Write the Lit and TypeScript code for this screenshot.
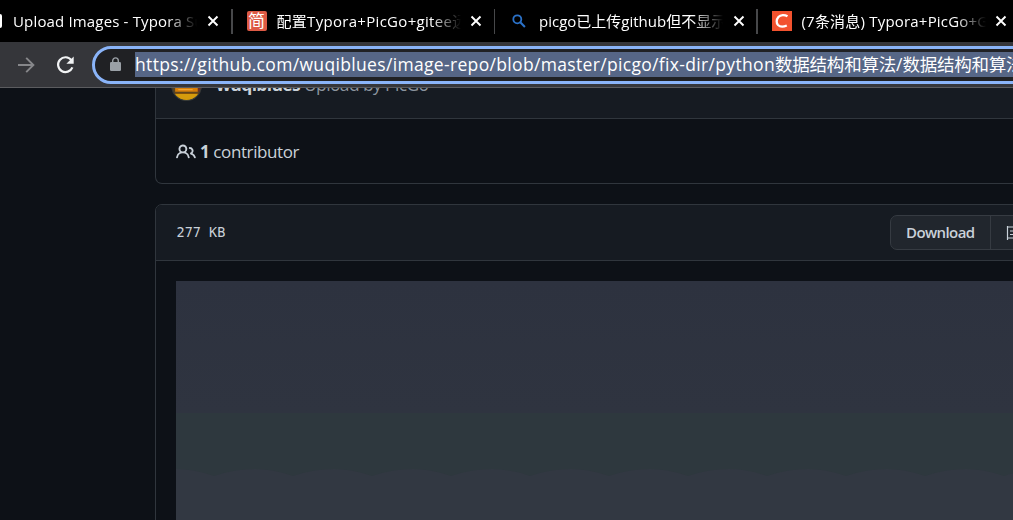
import { LitElement, html, css, svg } from "lit";
import { customElement } from "lit/decorators.js";

const closeIcon = html`<svg class="close" width="12" height="12" viewBox="0 0 12 12"><path d="M1.5 1.5l9 9M10.5 1.5l-9 9" stroke="#fff" stroke-width="1.9" fill="none"/></svg>`;

// Wavy lower edge of the green band inside the previewed image.
const wave = Array.from({ length: 12 }, (_, i) => `Q${i * 79 + 18} 56 ${i * 79 + 38} 63 Q${i * 79 + 58} 56 ${i * 79 + 79} 56`).join(" ");

@customElement("app-root")
export class AppRoot extends LitElement {
  static styles = css`
    :host { display: block; width: 100%; height: 520px; overflow: hidden; background: #0d1117; font-family: "Open Sans", "Noto Sans CJK SC", sans-serif; }
    * { box-sizing: border-box; }
    svg { display: block; flex: none; }
    .tabs { display: flex; height: 42px; background: #000; color: #fff; overflow: hidden; }
    .tab { display: flex; align-items: center; flex: none; width: 262.5px; height: 42px; padding-left: 14px; }
    .tab.first { width: 231px; padding-left: 0; }
    .tab.first .title { margin-left: 11px; letter-spacing: .16px; }
    .edge { width: 2px; height: 14px; background: #fff; border-radius: 0 2px 2px 0; flex: none; }
    .fav { width: 20px; height: 20px; margin-right: 10px; flex: none; display: flex; align-items: center; justify-content: center; }
    .jian { background: #dd5a45; border-radius: 2px; font-size: 17px; line-height: 20px; }
    .csdn { background: #f2522e; }
    .title { width: 184px; height: 24px; line-height: 24px; font-size: 15px; white-space: pre; overflow: hidden; flex: none; -webkit-mask-image: linear-gradient(90deg, #000 154px, transparent 184px); mask-image: linear-gradient(90deg, #000 154px, transparent 184px); }
    .t2 { letter-spacing: .3px; }
    .t4 { letter-spacing: .2px; }
    .close { margin-left: 9.5px; }
    .sep { width: 1.5px; height: 25px; margin-top: 9px; background: #47484a; flex: none; }
    .tab:not(.first) + .sep { margin-left: -1.5px; }
    .bar { display: flex; align-items: center; height: 46px; padding-left: 17px; background: #35363a; border-bottom: 1px solid #5b5c5f; overflow: hidden; }
    .reload { margin-left: 20px; }
    .omni { display: flex; align-items: center; flex: none; width: 960px; height: 38px; margin-left: 16px; padding-left: 15px; border: 3px solid #8ab4f8; border-radius: 19px; background: #202124; }
    .url { display: flex; height: 25px; line-height: 24px; margin-left: 14px; background: #566686; color: #fff; white-space: pre; font-size: 17.5px; }
    .u1 { letter-spacing: .333px; }
    .cjk { font-family: "Noto Sans CJK SC", sans-serif; letter-spacing: -.22px; line-height: 23px; }
    .page { padding-left: 155px; height: 432px; overflow: hidden; color: #c9d1d9; }
    .box { width: 900px; border: 1px solid #30363d; }
    .commit { height: 96px; border-top: 0; border-radius: 0 0 7px 7px; }
    .commit-head { display: flex; height: 31px; background: #161b22; border-bottom: 1px solid #30363d; padding-left: 15px; overflow: hidden; }
    .avatar { margin-top: -18px; }
    .msg { margin: -16px 0 0 14px; font-size: 17.5px; line-height: 24px; letter-spacing: -.64px; color: #8b949e; white-space: pre; }
    .msg b { color: #c9d1d9; font-weight: 700; }
    .contrib { display: flex; align-items: center; height: 64px; padding-left: 20px; padding-top: 2px; font-size: 17px; white-space: pre; }
    .contrib span { margin: -2px 0 0 4px; letter-spacing: -.4px; }
    .file { margin-top: 20px; height: 500px; border-radius: 7px; overflow: hidden; }
    .file-head { display: flex; align-items: center; justify-content: space-between; height: 56px; background: #161b22; border-bottom: 1px solid #30363d; padding-left: 20.5px; }
    .size { font: 13.5px "DejaVu Sans Mono", monospace; padding-bottom: 2px; }
    .buttons { display: flex; width: 164px; height: 35px; border: 1px solid #363b42; border-radius: 7px; background: #21262d; font-size: 15px; font-weight: 600; line-height: 33px; overflow: hidden; flex: none; }
    .dl { width: 100px; padding-left: 15px; border-right: 1px solid #363b42; letter-spacing: -.6px; }
    .trash { padding: 10px 0 0 15px; }
    .preview { margin: 20px 0 0 20px; }
  `;

  render() {
    return html`
      <div class="tabs">
        <div class="tab first"><i class="edge"></i><div class="title">Upload Images - Typora Support</div>${closeIcon}</div><i class="sep"></i>
        <div class="tab"><div class="fav jian">简</div><div class="title t2">配置Typora+PicGo+gitee远程图床</div>${closeIcon}</div><i class="sep"></i>
        <div class="tab"><div class="fav"><svg width="14" height="14" viewBox="0 0 14 14"><circle cx="5.3" cy="5.3" r="4" fill="none" stroke="#2b72c9" stroke-width="1.8"/><path d="M8.3 8.3l4.6 4.6" stroke="#2b72c9" stroke-width="2.1"/></svg></div><div class="title">picgo已上传github但不显示图片</div>${closeIcon}</div><i class="sep"></i>
        <div class="tab"><div class="fav csdn"><svg width="20" height="20" viewBox="0 0 20 20"><path d="M15.5 5.3C12.8 3.7 8.6 3.5 6.4 6 4.2 8.6 4.2 12.2 6 14c2.1 2 5.8 1.8 8.8.5" fill="none" stroke="#fff" stroke-width="2.3"/></svg></div><div class="title t4">(7条消息) Typora+PicGo+Gitee</div>${closeIcon}</div>
      </div>
      <div class="bar">
        <svg width="18" height="18" viewBox="0 0 18 18"><path d="M1 9h15M9.2 1.8L16.4 9l-7.2 7.2" fill="none" stroke="#86878a" stroke-width="1.9"/></svg>
        <svg class="reload" width="21" height="20" viewBox="0 0 21 20"><path d="M16.4 5.2A7.4 7.4 0 1 0 17.4 12.3" fill="none" stroke="#f1f3f4" stroke-width="2.2"/><path d="M18.7 1.5v7.3h-7.3z" fill="#f1f3f4"/></svg>
        <div class="omni">
          <svg width="11" height="15" viewBox="0 0 11 15"><path d="M2.7 6V3.700a2.8 2.8 0 0 1 5.6 0V6" fill="none" stroke="#9aa0a6" stroke-width="1.4"/><rect y="5" width="11" height="9" rx="1.2" fill="#9aa0a6"/></svg>
          <div class="url"><span class="u1">https://github.com/wuqiblues/image-repo/blob/master/picgo/fix-dir/python</span><span class="cjk">数据结构和算法</span><span>/</span><span class="cjk">数据结构和算法</span></div>
        </div>
      </div>
      <div class="page">
        <div class="box commit">
          <div class="commit-head">
            <svg class="avatar" width="31" height="31" viewBox="0 0 30 30"><defs><clipPath id="c"><circle cx="15" cy="15" r="14.5"/></clipPath></defs><g clip-path="url(#c)"><path fill="#574323" d="M0 0h30v30H0z"/><path fill="#d77e08" d="M4 12h22v9H4z"/><path fill="#f0a331" d="M7 18.500h14v1.200H7z"/><path fill="#80500c" d="M3 22h24v1.200H3z"/><path fill="#d59b0c" d="M3 23.200h24v7H3z"/><path fill="#6e3023" d="M26 17h4v4h-4z"/></g><circle cx="15" cy="15" r="14.5" fill="none" stroke="#363a3a"/></svg>
            <div class="msg"><b>wuqiblues</b> Upload by PicGo</div>
          </div>
          <div class="contrib">
            <svg width="20" height="20" viewBox="0 0 16 16" fill="#c9d1d9"><path fill-rule="evenodd" d="M5.500 3.500a2 2 0 100 4 2 2 0 000-4zM2 5.500a3.500 3.500 0 115.898 2.549 5.507 5.507 0 013.034 4.084.75.75 0 11-1.482.235 4.001 4.001 0 00-7.900 0 .75.75 0 01-1.482-.236A5.507 5.507 0 013.102 8.050 3.490 3.490 0 012 5.500zM11 4a.75.75 0 100 1.500 1.500 1.500 0 01.666 2.844.75.75 0 00-.416.672v.352a.75.75 0 00.574.730c1.200.289 2.162 1.200 2.522 2.372a.75.75 0 101.434-.440 5.010 5.010 0 00-2.560-3.012A3 3 0 0011 4z"/></svg>
            <span><b>1</b> contributor</span>
          </div>
        </div>
        <div class="box file">
          <div class="file-head">
            <div class="size">277 KB</div>
            <div class="buttons"><div class="dl">Download</div><div class="trash"><svg width="14" height="14" viewBox="0 0 14 14"><path d="M1.5 0v14M1 1h13M4 5h10M4 8.500h10M1 12h13" fill="none" stroke="#c9d1d9" stroke-width="1.2"/></svg></div></div>
          </div>
          <svg class="preview" width="880" height="260" viewBox="0 0 880 260">
            <defs>
              <linearGradient id="top" x2="0" y2="1"><stop stop-color="#2d323f"/><stop offset="1" stop-color="#2f3440"/></linearGradient>
            </defs>
            <path fill="url(#top)" d="M0 0h880v132H0z"/>
            <path fill="#323842" d="M0 132h880v128H0z"/>
            ${svg`<g transform="translate(0 132)"><path fill="#2e383e" d="M0 0V56 ${wave} V0z"/></g>`}
          </svg>
        </div>
      </div>`;
  }
}
